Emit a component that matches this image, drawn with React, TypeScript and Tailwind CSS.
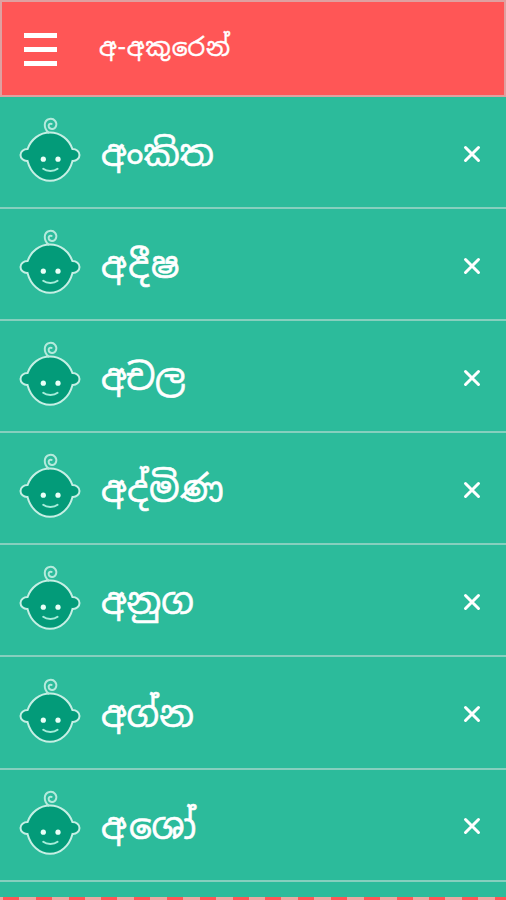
import React from "react";

const names = [
  { text: "අංකිත", spacing: "tracking-normal" },
  { text: "අදීෂ", spacing: "tracking-[2px]" },
  { text: "අචල", spacing: "tracking-[-0.4px]" },
  { text: "අද්මිණ", spacing: "tracking-[1px]" },
  { text: "අනුග", spacing: "tracking-normal" },
  { text: "අග්න", spacing: "tracking-normal" },
  { text: "අශෝ", spacing: "tracking-[2.4px]" },
];

const BabyIcon = () => (
  <svg className="-mt-1 h-[66px] w-16 shrink-0" viewBox="0 0 64 66" fill="none">
    <path
      d="M9.600 32C13 22.300 21.600 15.600 32 15.600S51 22.300 54.400 32c4 0 7.100 2.600 7.100 5.900 0 3.500-3 6.200-7 6C51.400 55.600 42.600 63.800 32 63.800S12.600 55.600 9.500 43.900c-4 .2-7-2.500-7-6C2.500 34.600 5.600 32 9.600 32Z"
      fill="#039b79"
      stroke="#c5efe4"
      strokeWidth="2"
    />
    <path
      d="M30.600 15.500C25.500 11.500 25.200 3.300 31.500 1.900c4.800-.9 8 3.400 6.400 7.500-1.200 3.200-6 3.500-7.100.5-.7-2.200 1-3.800 2.800-3"
      stroke="#b5eadc"
      strokeWidth="2"
      strokeLinecap="round"
    />
    <circle cx="25.300" cy="42.200" r="2.600" fill="#e9fff7" />
    <circle cx="40" cy="42.200" r="2.600" fill="#e9fff7" />
    <path d="M25.200 51.800c3.600 3 10.800 3 14.400 0" stroke="#a5ecd9" strokeWidth="2" strokeLinecap="round" />
  </svg>
);

const Header = () => (
  <header className="flex h-[97px] items-center border-2 border-[#dfa0a0] bg-[#ff5656] pl-[22px]">
    <div className="flex w-[33px] flex-col gap-[9px] pt-0.5">
      <span className="h-[5px] bg-white" />
      <span className="h-[5px] bg-white" />
      <span className="h-[5px] bg-white" />
    </div>
    <h1 className="mb-1 ml-[42px] text-[25px] leading-8 tracking-[1px] whitespace-nowrap text-white [-webkit-text-stroke:0.4px_white]">
      අ-අකුරෙන්
    </h1>
  </header>
);

export default function App() {
  return (
    <div className="flex h-[900px] w-[506px] flex-col overflow-hidden bg-[#2cbb9b] font-['Noto_Sans_Sinhala','Noto_Sans',sans-serif]">
      <Header />
      <ul className="flex-1">
        {names.map((name) => (
          <li
            key={name.text}
            className="flex h-[112.1px] items-center border-b-2 border-[#86cfbe] pr-[25px] pl-[18px]"
          >
            <BabyIcon />
            <span
              className={`mt-1 ml-[19px] text-[36px] leading-[48px] whitespace-nowrap text-white [-webkit-text-stroke:0.6px_white] ${name.spacing}`}
            >
              {name.text}
            </span>
            <svg className="mt-[3px] ml-auto size-[18px]" viewBox="0 0 18 18" stroke="white" strokeWidth="3" strokeLinecap="round">
              <path d="m2.500 2.500 13 13M15.500 2.500l-13 13" />
            </svg>
          </li>
        ))}
      </ul>
      <div className="h-[3px] shrink-0 bg-[repeating-linear-gradient(90deg,#eba9a3_0_3px,#ff5656_3px_19px,#eba9a3_19px_32.8px)]" />
    </div>
  );
}
